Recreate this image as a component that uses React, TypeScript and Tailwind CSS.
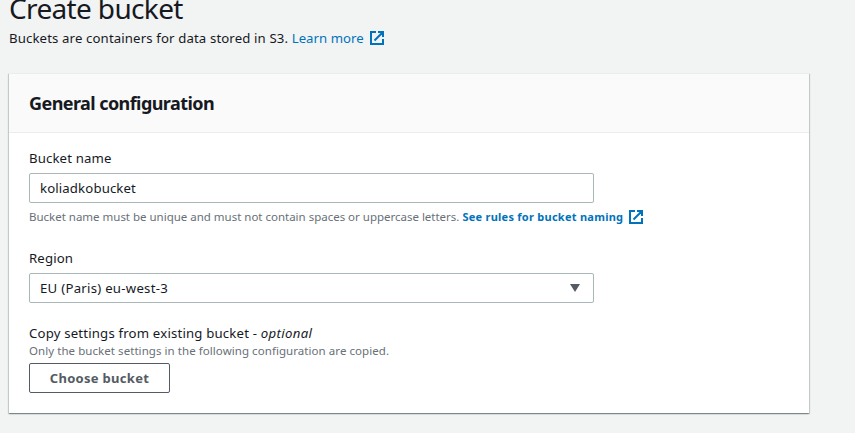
const Ext = ({ className }: { className: string }) => (
  <svg className={className} width="16" height="16" viewBox="0 0 16 16" fill="none" stroke="#0073bb" strokeWidth="2">
    <path d="M9 2h5v5M5.5 10.5L14 2M14 9v5H2V2h5" />
  </svg>
);

export default function App() {
  return (
    <div className="h-[433px] w-[855px] overflow-hidden bg-[#f2f3f3] pl-[9px] font-['Noto_Sans',sans-serif] text-[#16191f]">
      <h1 className="-mt-[10px] h-[37px] text-[28px] leading-[36px] tracking-[-0.65px] whitespace-nowrap">Create bucket</h1>
      <p className="flex h-[22px] items-center text-[13.2px] leading-[22px] tracking-[0.13px] whitespace-nowrap">
        Buckets are containers for data stored in S3.&nbsp;<a className="tracking-[0.03px] text-[#0073bb]">Learn more</a>
        <Ext className="ml-[5px]" />
      </p>
      <section className="mt-[24px] h-[340px] w-[800px] bg-white shadow-[0_1px_1px_0_rgba(0,28,36,0.3),1px_1px_1px_0_rgba(0,28,36,0.15),-1px_1px_1px_0_rgba(0,28,36,0.15)]">
        <header className="flex h-[60px] items-center border-y border-b-[#eaeded] border-t-[#eaeded] bg-[#fafafa] px-5">
          <h2 className="text-[18px] leading-[26px] font-bold tracking-[-0.57px] whitespace-nowrap">General configuration</h2>
        </header>
        <div className="px-5 pt-[14px] text-[13.2px] leading-[22px] tracking-[0.13px] whitespace-nowrap">
          <label className="block">Bucket name</label>
          <div className="mt-1 flex h-[30px] w-[565px] items-center rounded-[2px] border border-[#aab7b8] px-[10px]">koliadkobucket</div>
          <p className="mt-[3px] flex items-center text-[11.5px] tracking-[-0.01px] text-[#687078]">
            Bucket name must be unique and must not contain spaces or uppercase letters.&nbsp;<a className="text-[11px] font-bold tracking-[0.26px] text-[#0073bb]">See rules for bucket naming</a>
            <Ext className="ml-[5px]" />
          </p>
          <label className="mt-[19px] block">Region</label>
          <div className="mt-1 flex h-[30px] w-[565px] items-center justify-between rounded-[2px] border border-[#aab7b8] px-[10px] tracking-[0.26px]">
            EU (Paris) eu-west-3
            <svg className="mr-[3px]" width="10" height="8"><path d="M0 0h10L5 8z" fill="#545b64" /></svg>
          </div>
          <div className="mt-[19px] tracking-[0.18px]">Copy settings from existing bucket - <i className="tracking-[0.35px]">optional</i></div>
          <p className="-mt-px text-[11.5px] leading-[16px] tracking-[0.06px] text-[#687078]">Only the bucket settings in the following configuration are copied.</p>
          <button className="mt-1 h-[30px] w-[141px] rounded-[2px] border border-[#545b64] text-[13px] leading-[22px] font-bold tracking-[0.3px] text-[#545b64]">Choose bucket</button>
        </div>
      </section>
    </div>
  );
}
